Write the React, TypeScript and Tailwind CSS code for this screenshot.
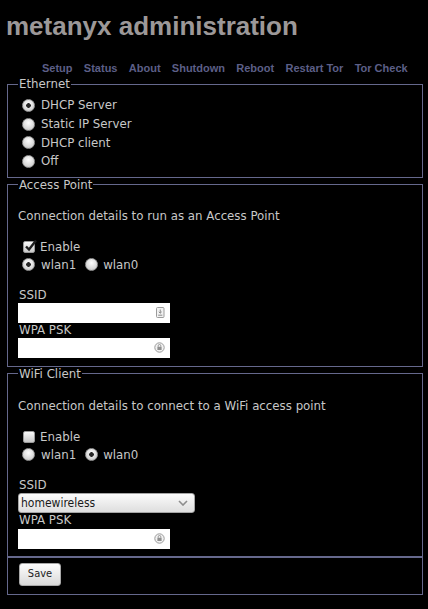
import React from 'react'

const links = ['Setup', 'Status', 'About', 'Shutdown', 'Reboot', 'Restart Tor', 'Tor Check']

function Radio({ name, checked }: { name: string; checked?: boolean }) {
  return (
    <input
      type="radio"
      name={name}
      defaultChecked={checked}
      className="ml-[4px] h-[13px] w-[13px] shrink-0 appearance-none rounded-full border border-[#9a9a9a] bg-[radial-gradient(circle_at_50%_35%,#fdfdfd,#d4d4d4_70%,#aaaaaa)] checked:bg-[radial-gradient(circle,#262626_0_2px,transparent_2.6px),radial-gradient(circle_at_50%_35%,#fdfdfd,#d4d4d4_70%,#aaaaaa)]"
    />
  )
}

function Check({ checked }: { checked?: boolean }) {
  return (
    <span className="relative ml-[5px] h-[12px] w-[12px] shrink-0 rounded-[2px] border border-[#9a9a9a] bg-[linear-gradient(#fafafa,#c8c8c8)]">
      {checked && (
        <svg className="absolute -top-[3px] left-[0px]" width="14" height="13" viewBox="0 0 14 13">
          <path d="M2 7.5 L5 10.5 L12 1.5" fill="none" stroke="#1e1e1e" strokeWidth="2.4" />
        </svg>
      )}
    </span>
  )
}

function CardIcon() {
  return (
    <svg width="9" height="11" viewBox="0 0 9 11">
      <rect x="0.5" y="0.5" width="7.5" height="10" rx="1" fill="#f2f2f2" stroke="#9b9b9b" />
      <path d="M4.25 2.5 V6 M2.8 4.8 L4.25 6.2 L5.7 4.8" fill="none" stroke="#8a8a8a" strokeWidth="1" />
      <path d="M2.2 8.2 H6.3" stroke="#8a8a8a" strokeWidth="1" />
    </svg>
  )
}

function KeyIcon() {
  return (
    <svg width="11" height="11" viewBox="0 0 11 11">
      <circle cx="5.5" cy="5.5" r="4.7" fill="#f2f2f2" stroke="#9b9b9b" />
      <rect x="3.4" y="4.8" width="4.2" height="3.2" fill="#8f8f8f" />
      <path d="M4.2 4.8 V3.8 a1.3 1.3 0 0 1 2.6 0 V4.8" fill="none" stroke="#8f8f8f" strokeWidth="0.9" />
    </svg>
  )
}

function TextBox({ icon }: { icon: 'card' | 'key' }) {
  return (
    <div className="flex h-[20px] w-[152px] items-center bg-white pr-[5px]">
      <input
        type={icon === 'key' ? 'password' : 'text'}
        className="h-full min-w-0 flex-1 bg-transparent px-[2px] text-[12px] text-black outline-none"
      />
      {icon === 'card' ? <CardIcon /> : <KeyIcon />}
    </div>
  )
}

function WlanRow({ name, first }: { name: string; first: 'wlan1' | 'wlan0' }) {
  return (
    <div className="flex h-[18px] items-center">
      <Radio name={name} checked={first === 'wlan1'} />
      <span className="ml-[6px]">wlan1</span>
      <span className="ml-[5px] flex items-center">
        <Radio name={name} checked={first === 'wlan0'} />
        <span className="ml-[5px]">wlan0</span>
      </span>
    </div>
  )
}

export default function App() {
  return (
    <div className="min-h-screen bg-black pb-[10px] font-['DejaVu_Sans',sans-serif] text-[11.8px] leading-[14px] text-[#c8c8c8]">
      <h1 className="pl-[6px] pt-[11px] font-['Liberation_Sans',Arial,sans-serif] text-[26px] font-bold leading-[30px] text-[#9c9898]">
        metanyx administration
      </h1>
      <nav className="mt-[21px] flex gap-[11.3px] pl-[42px] font-['Liberation_Sans',Arial,sans-serif] text-[11px] font-bold leading-[13px] text-[#5c5f87]">
        {links.map((l) => (
          <a key={l} href="#">
            {l}
          </a>
        ))}
      </nav>

      <form className="ml-[7px] mt-[2px] w-[416px]">
        <fieldset className="border border-[#65688c] px-[10px] pb-[6px] pt-[5px]">
          <legend className="px-[1px] leading-[14px]">Ethernet</legend>
          {['DHCP Server', 'Static IP Server', 'DHCP client', 'Off'].map((t, i) => (
            <label key={t} className="flex h-[18.7px] items-center">
              <Radio name="eth" checked={i === 0} />
              <span className="ml-[6px]">{t}</span>
            </label>
          ))}
        </fieldset>

        <fieldset className="border border-[#65688c] px-[10px] pb-[8px]">
          <legend className="px-[1px] leading-[14px]">Access Point</legend>
          <p className="mt-[17px]">Connection details to run as an Access Point</p>
          <label className="mt-[15px] flex h-[18px] items-center">
            <Check checked />
            <span className="ml-[5px]">Enable</span>
          </label>
          <WlanRow name="ap" first="wlan1" />
          <div className="mt-[14px] pl-[1px]">SSID</div>
          <div className="mt-[1px]">
            <TextBox icon="card" />
          </div>
          <div className="pl-[1px]">WPA PSK</div>
          <div className="mt-[1px]">
            <TextBox icon="key" />
          </div>
        </fieldset>

        <fieldset className="border border-[#65688c] px-[10px] pb-[7px]">
          <legend className="px-[1px] leading-[14px]">WiFi Client</legend>
          <p className="mt-[18px]">Connection details to connect to a WiFi access point</p>
          <label className="mt-[15px] flex h-[18px] items-center">
            <Check />
            <span className="ml-[5px]">Enable</span>
          </label>
          <WlanRow name="cl" first="wlan0" />
          <div className="mt-[14px] pl-[1px]">SSID</div>
          <div className="relative mt-[1px] w-[177px]">
            <select className="h-[20px] w-full appearance-none rounded-[3px] border border-[#a5a5a5] bg-[linear-gradient(#fbfbfb,#dedede)] pl-[2px] font-['DejaVu_Sans_Condensed','DejaVu_Sans',sans-serif] text-[12px] text-[#1a1a1a] outline-none">
              <option>homewireless</option>
            </select>
            <svg className="pointer-events-none absolute right-[7px] top-[7px]" width="10" height="6" viewBox="0 0 10 6">
              <path d="M1 1 L5 5 L9 1" fill="none" stroke="#8d8d8d" strokeWidth="1.6" />
            </svg>
          </div>
          <div className="pl-[1px]">WPA PSK</div>
          <div className="mt-[2px]">
            <TextBox icon="key" />
          </div>
        </fieldset>

        <fieldset className="border border-[#65688c] px-[11px] pb-[8px] pt-[5px]">
          <button
            type="button"
            className="h-[23px] w-[42px] rounded-[3px] border border-[#a8a8a8] bg-[linear-gradient(#fdfdfd,#d9d9d9)] font-['DejaVu_Sans_Condensed','DejaVu_Sans',sans-serif] text-[11px] text-[#222]"
          >
            Save
          </button>
        </fieldset>
      </form>
    </div>
  )
}
